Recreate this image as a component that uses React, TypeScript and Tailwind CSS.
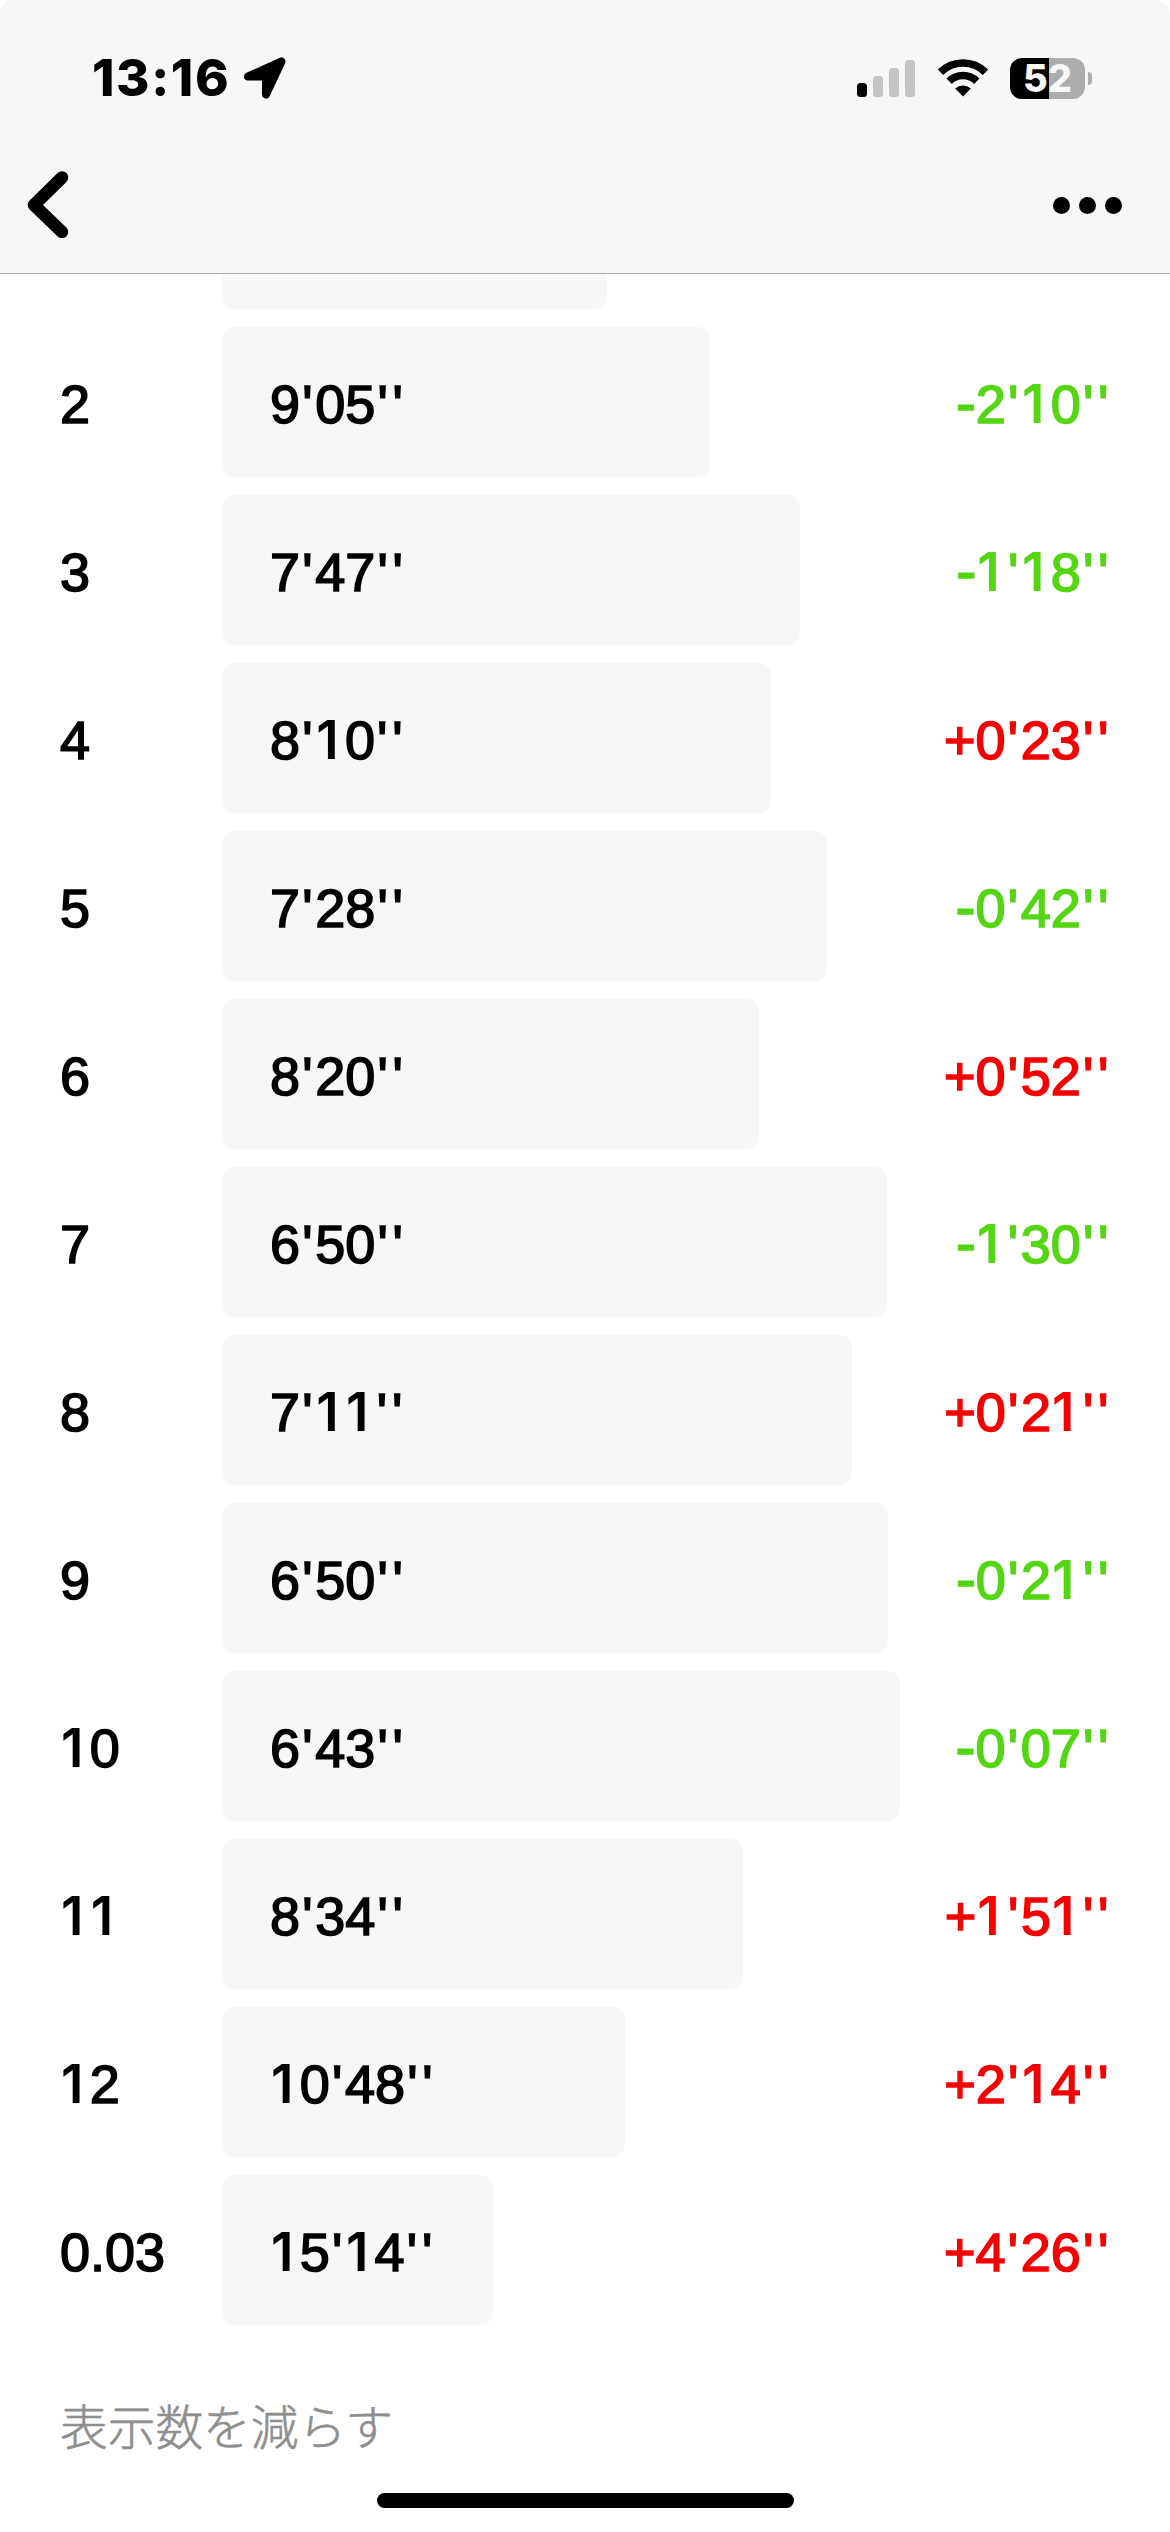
import clsx from "clsx";

type Split = {
  lap: string;
  pace: string;
  diff: string;
  width: number;
};

const splits: Split[] = [
  { lap: "2", pace: "9'05''", diff: "-2'10''", width: 488 },
  { lap: "3", pace: "7'47''", diff: "-1'18''", width: 578 },
  { lap: "4", pace: "8'10''", diff: "+0'23''", width: 549 },
  { lap: "5", pace: "7'28''", diff: "-0'42''", width: 605 },
  { lap: "6", pace: "8'20''", diff: "+0'52''", width: 537 },
  { lap: "7", pace: "6'50''", diff: "-1'30''", width: 665 },
  { lap: "8", pace: "7'11''", diff: "+0'21''", width: 630 },
  { lap: "9", pace: "6'50''", diff: "-0'21''", width: 666 },
  { lap: "10", pace: "6'43''", diff: "-0'07''", width: 678 },
  { lap: "11", pace: "8'34''", diff: "+1'51''", width: 521 },
  { lap: "12", pace: "10'48''", diff: "+2'14''", width: 403 },
  { lap: "0.03", pace: "15'14''", diff: "+4'26''", width: 271 },
];

const glyphStyles: Record<string, string> = {
  "'": "ml-[2.2px] tracking-[2.6px]",
  "-": "text-[60px] leading-[0]",
  "1": "font-['Inter'] text-[53px] leading-[0] font-semibold ml-[1px] tracking-[6.3px] [-webkit-text-stroke-width:0px]",
};

function Figures({ value }: { value: string }) {
  return (
    <>
      {value.split("").map((char, i) =>
        glyphStyles[char] ? (
          <span key={i} className={glyphStyles[char]}>
            {char}
          </span>
        ) : (
          char
        )
      )}
    </>
  );
}

function StatusBar() {
  return (
    <div className="flex h-[156px] items-center justify-between pr-[78px] pl-[92px]">
      <div className="flex items-center">
        <span className="font-['Inter',sans-serif] text-[51px] leading-[50px] font-extrabold tracking-[1.6px]">
          13:16
        </span>
        <svg className="ml-[14px] h-[42px] w-[42px]" viewBox="0 0 42 42">
          <path
            d="M4 19.5 37.5 4.5 22 37.5V19.5Z"
            fill="black"
            stroke="black"
            strokeWidth="8"
            strokeLinejoin="round"
          />
        </svg>
      </div>

      <div className="flex items-center">
        {/* Signal */}
        <div className="flex h-[37px] items-end gap-[6px]">
          <span className="h-[14px] w-[10px] rounded-[3.5px] bg-black" />
          <span className="h-[21px] w-[10px] rounded-[3.5px] bg-[#c5c5c5]" />
          <span className="h-[29px] w-[10px] rounded-[3.5px] bg-[#c5c5c5]" />
          <span className="h-[37px] w-[10px] rounded-[3.5px] bg-[#c5c5c5]" />
        </div>

        {/* Wi-Fi */}
        <svg className="ml-[22px] h-[38px] w-[52px]" viewBox="0 0 52 38">
          <g fill="none" stroke="black" strokeWidth="7.6">
            <path d="M3.5 13.2A32 32 0 0 1 48.5 13.2" />
            <path d="M12.2 22.2A19.6 19.6 0 0 1 39.8 22.2" />
          </g>
          <path d="M26 37.5 18.2 29.6A11.4 11.4 0 0 1 33.8 29.6Z" fill="black" />
        </svg>

        {/* Battery */}
        <div className="ml-[21px] flex h-[41px] w-[75px] items-center justify-center rounded-[12px] bg-linear-to-r from-black from-52% to-[#adadad] to-52%">
          <span className="font-['Inter',sans-serif] text-[38px] leading-none font-extrabold text-[#f7f7f7]">
            52
          </span>
        </div>
        <span className="ml-[3px] h-[13px] w-[4px] rounded-r-full bg-[#adadad]" />
      </div>
    </div>
  );
}

function NavBar() {
  return (
    <div className="flex h-[117px] items-start justify-between pr-[48px] pl-[27px]">
      <button aria-label="戻る" className="mt-[15px]">
        <svg className="h-[68px] w-[42px]" viewBox="0 0 42 68">
          <path
            d="M35 6.5 7 34 35 61"
            fill="none"
            stroke="black"
            strokeWidth="12.5"
            strokeLinecap="round"
            strokeLinejoin="round"
          />
        </svg>
      </button>
      <button aria-label="メニュー" className="mt-[41px] flex gap-[9px]">
        <span className="size-[17px] rounded-full bg-black" />
        <span className="size-[17px] rounded-full bg-black" />
        <span className="size-[17px] rounded-full bg-black" />
      </button>
    </div>
  );
}

function SplitRow({ lap, pace, diff, width }: Split) {
  return (
    <li className="flex h-[150px] items-center">
      <span className="w-[162px] shrink-0 pt-[3px]">
        <Figures value={lap} />
      </span>
      <div
        className="flex h-full shrink-0 items-center rounded-[12px] bg-[#f7f7f7] pl-[48px]"
        style={{ width }}
      >
        <span className="pt-[3px]">
          <Figures value={pace} />
        </span>
      </div>
      <span
        className={clsx(
          "ml-auto pt-[3px]",
          diff.startsWith("-") ? "text-[#54d613]" : "text-[#f50000]"
        )}
      >
        <Figures value={diff} />
      </span>
    </li>
  );
}

export default function App() {
  return (
    <div className="flex h-[2532px] w-[1170px] flex-col overflow-hidden bg-white text-black">
      <header className="h-[274px] shrink-0 rounded-t-[14px] border-b border-[#adadad] bg-[#f7f7f7]">
        <StatusBar />
        <NavBar />
      </header>

      <main className="flex flex-1 flex-col">
        {/* First split, scrolled under the header */}
        <div className="ml-[222px] h-[35px] w-[385px] rounded-b-[12px] bg-[#f7f7f7]" />

        <ul className="mt-[18px] flex flex-col gap-[18px] pr-[59px] pl-[60px] font-['Liberation_Sans',sans-serif] text-[54px] leading-none whitespace-nowrap [-webkit-text-stroke-width:1.6px]">
          {splits.map((split) => (
            <SplitRow key={split.lap} {...split} />
          ))}
        </ul>

        <button className="mt-[76px] ml-[60px] self-start font-['Noto_Sans_CJK_JP',sans-serif] text-[47.7px] leading-[48px] font-light text-[#8e8e8e] [-webkit-text-stroke-width:0.6px]">
          表示数を減らす
        </button>
      </main>

      <div className="mx-auto mb-[24px] h-[15px] w-[417px] shrink-0 rounded-full bg-black" />
    </div>
  );
}
